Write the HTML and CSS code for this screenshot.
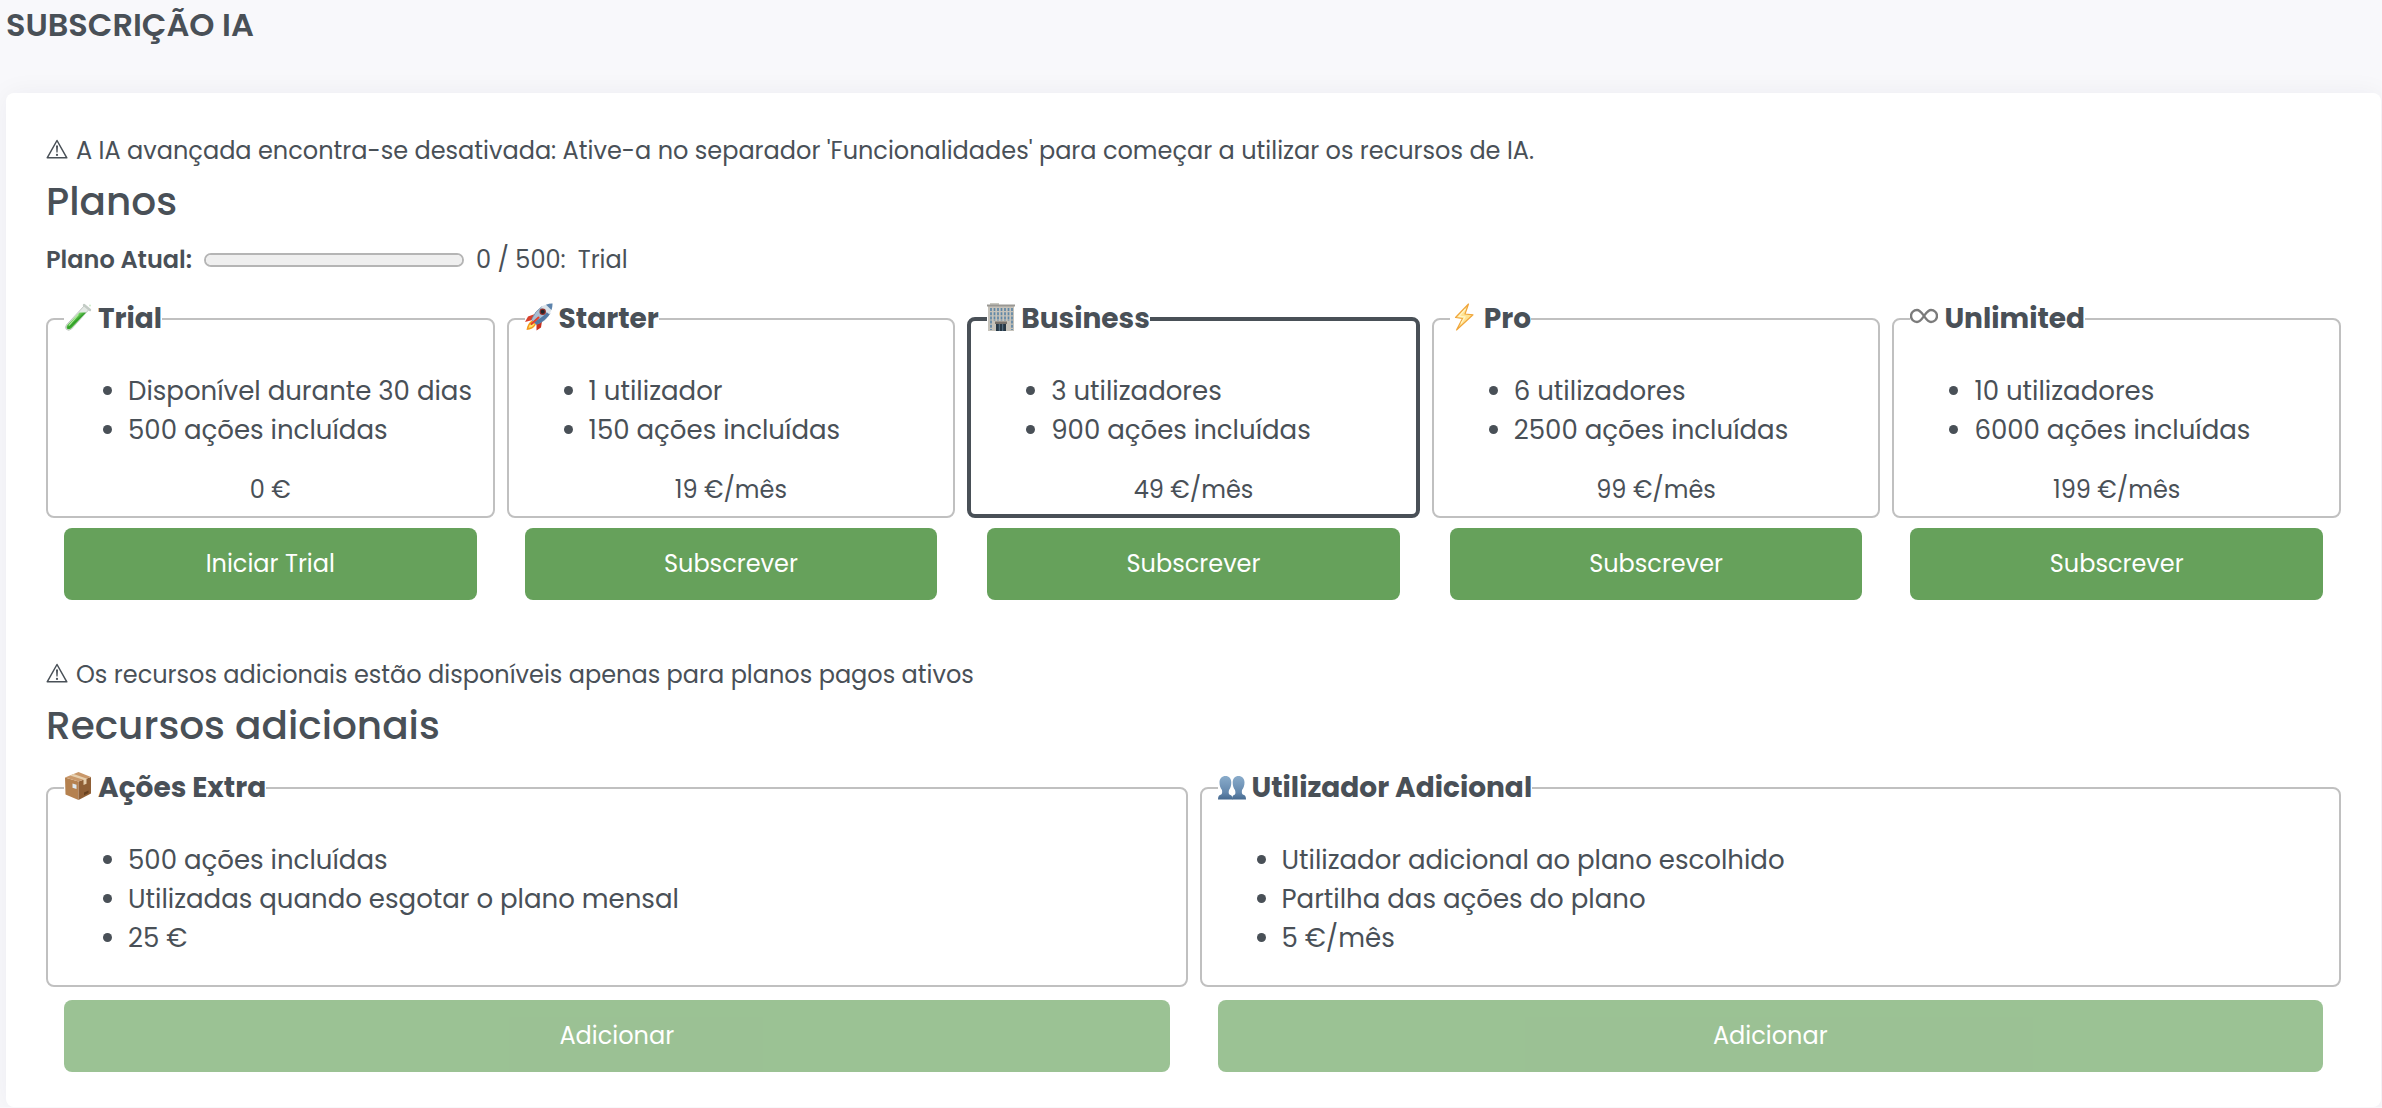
FILE: index.html
```html
<!DOCTYPE html>
<html lang="pt">
  <head>
    <meta charset="UTF-8" />
    <meta name="viewport" content="width=device-width, initial-scale=1.0" />
    <title>Subscrição IA</title>
    <link rel="stylesheet" href="styles.css">
  </head>
  <body>
    <!-- shared warning icon -->
    <svg class="sprite" aria-hidden="true">
      <symbol id="warning" viewBox="0 0 22 20">
        <path d="M11 1.5 L20.8 18.8 H1.2 Z" fill="none" stroke="currentColor" stroke-width="1.5" stroke-linejoin="round" />
        <path d="M10 6.5 h2 l-.4 7 h-1.2 z" fill="currentColor" />
        <circle cx="11" cy="15.9" r="1.1" fill="currentColor" />
      </symbol>
    </svg>

    <h1 class="page-title">SUBSCRIÇÃO IA</h1>

    <main class="card">
      <p class="notice"><svg class="warning-icon"><use href="#warning" /></svg>A IA avançada encontra-se desativada: Ative-a no separador 'Funcionalidades' para começar a utilizar os recursos de IA.</p>
      <h2>Planos</h2>
      <div class="usage">
        <label for="usage-bar">Plano Atual:</label>
        <progress id="usage-bar" value="0" max="500"></progress>
        <span>0 / 500:</span>
        <span>Trial</span>
      </div>

      <div class="plans">
        <div class="plan">
          <fieldset>
            <legend>
              <svg class="emoji" viewBox="0 0 28 28">
                <defs>
                  <linearGradient id="tube" x1="0" y1="0" x2="1" y2="1">
                    <stop offset="0.35" stop-color="#7fd66b" />
                    <stop offset="0.5" stop-color="#2f9e26" />
                    <stop offset="0.65" stop-color="#58c43e" />
                  </linearGradient>
                </defs>
                <path d="M20.500 2.500 L25 6.500 L7.500 26 Q4.500 28.500 2.200 26.200 Q.8 24.200 2.500 21.800 Z" fill="#e4e9e5" stroke="#aab5ad" stroke-width=".7" />
                <path d="M15.500 9.500 H22 L7.500 25 Q4.800 27.300 3 25.500 Q1.800 24 3.300 22 Z" fill="url(#tube)" />
                <path d="M14.500 11.500 L5 22.500" stroke="#b8efa5" stroke-width="1.1" />
                <path d="M20 2 L26 7" stroke="#c3cbc5" stroke-width="2.400" stroke-linecap="round" />
                <circle cx="26" cy="2.500" r="1" fill="#cfeccb" />
              </svg>
              Trial
            </legend>
            <ul>
              <li>Disponível durante 30 dias</li>
              <li>500 ações incluídas</li>
            </ul>
            <p class="price">0 €</p>
          </fieldset>
          <button type="button">Iniciar Trial</button>
        </div>

        <div class="plan">
          <fieldset>
            <legend>
              <svg class="emoji" viewBox="0 0 28 28">
                <path d="M10 11 L3 13.500 L0 19 L7.500 17 Z" fill="#d8402c" />
                <path d="M17 18 L16 24.500 L11.500 27.500 L11.500 20.500 Z" fill="#c9301f" />
                <path d="M7 17.500 Q2.500 20 1.500 27 Q8 26.500 11 21.500 Z" fill="#f59a1b" />
                <path d="M7.500 19.500 Q4.500 21 3.500 25 Q7.500 24.500 9.500 21.500 Z" fill="#ffe56a" />
                <path d="M6.500 16.500 Q10 8 17 3.500 L25 10.500 Q20 18.500 11.500 21.500 Z" fill="#a9bed4" stroke="#5c7898" stroke-width=".6" />
                <path d="M9 19 Q18 14 23 8.500 L25 10.500 Q20 18.500 11.500 21.500 Z" fill="#527aa5" />
                <path d="M16 4.200 Q21 .5 27.500 .5 Q27.500 6.500 24.500 11.500 Z" fill="#dbe3ea" />
                <path d="M21 1.800 Q24 .6 27.500 .5 Q27.500 4 26.500 7 Z" fill="#5c83ac" />
                <circle cx="17.700" cy="8.800" r="3.200" fill="#8f2d28" />
                <circle cx="17.700" cy="8.800" r="2" fill="#20262e" />
                <path d="M13.500 14.500 L6.500 21" stroke="#e2402d" stroke-width="2" stroke-linecap="round" />
              </svg>
              Starter
            </legend>
            <ul>
              <li>1 utilizador</li>
              <li>150 ações incluídas</li>
            </ul>
            <p class="price">19 €/mês</p>
          </fieldset>
          <button type="button">Subscrever</button>
        </div>

        <div class="plan plan-active">
          <fieldset>
            <legend>
              <svg class="emoji" viewBox="0 0 28 28">
                <rect x="3" y="0" width="9" height="3" fill="#c9c8c0" />
                <rect x="1" y="2" width="26" height="26" fill="#c6c3bb" />
                <rect x="0" y="1.500" width="28" height="2" fill="#9a9893" />
                <path d="M4 5 V27 M7.500 5 V18 M11 5 V18 M14.500 5 V18 M18 5 V18 M21.500 5 V18 M25 5 V27" stroke="#5f87a6" stroke-width="1.700" stroke-dasharray="3 1.200" />
                <rect x="8" y="18.500" width="12" height="2.500" fill="#77716b" />
                <rect x="9" y="21" width="10" height="7" fill="#263745" />
                <path d="M12.300 21 V28 M15.700 21 V28" stroke="#708ba0" stroke-width=".8" />
              </svg>
              Business
            </legend>
            <ul>
              <li>3 utilizadores</li>
              <li>900 ações incluídas</li>
            </ul>
            <p class="price">49 €/mês</p>
          </fieldset>
          <button type="button">Subscrever</button>
        </div>

        <div class="plan">
          <fieldset>
            <legend>
              <svg class="emoji" viewBox="0 0 28 28">
                <path d="M18.500 1 L5.500 14.500 L12.500 15.500 L6.500 27 L23 11.800 L15 11 Z" fill="#ffe391" stroke="#f0a63c" stroke-width="1.200" stroke-linejoin="round" />
                <path d="M15.500 6 L9 13.200 L15 14 L11 20.500" fill="none" stroke="#fff6c8" stroke-width="1.200" />
              </svg>
              Pro
            </legend>
            <ul>
              <li>6 utilizadores</li>
              <li>2500 ações incluídas</li>
            </ul>
            <p class="price">99 €/mês</p>
          </fieldset>
          <button type="button">Subscrever</button>
        </div>

        <div class="plan">
          <fieldset>
            <legend>
              <svg class="emoji" viewBox="0 0 28 28">
                <path d="M14 13 C11.500 9.500 10 7 7 7 A6 6 0 0 0 7 19 C10 19 11.500 16.500 14 13 C16.500 9.500 18 7 21 7 A6 6 0 0 1 21 19 C18 19 16.500 16.500 14 13 Z" fill="none" stroke="#7b7b7b" stroke-width="2.400" />
              </svg>
              Unlimited
            </legend>
            <ul>
              <li>10 utilizadores</li>
              <li>6000 ações incluídas</li>
            </ul>
            <p class="price">199 €/mês</p>
          </fieldset>
          <button type="button">Subscrever</button>
        </div>
      </div>

      <p class="notice"><svg class="warning-icon"><use href="#warning" /></svg>Os recursos adicionais estão disponíveis apenas para planos pagos ativos</p>
      <h2>Recursos adicionais</h2>

      <div class="plans extras">
        <div class="plan">
          <fieldset>
            <legend>
              <svg class="emoji" viewBox="0 0 28 28">
                <path d="M1 5.500 L14.500 9.500 V28 L1.500 22.500 Z" fill="#b5814f" />
                <path d="M14.500 9.500 L27 5 V21.500 L14.500 28 Z" fill="#8f5f36" />
                <path d="M1 5.500 L14.500 0 L27 5 L14.500 9.500 Z" fill="#c9986a" />
                <path d="M6 3.400 L19.500 7.700 V13 L22.500 11.800 V6.600 L9.500 2 Z" fill="#e6cfae" />
                <path d="M8.500 11.500 L12.500 12.700 V17 L8.500 15.700 Z" fill="#dfe8ee" />
                <path d="M20 20.500 L24.500 18.500 V21 L20 23.200 Z" fill="#67411f" />
              </svg>
              Ações Extra
            </legend>
            <ul>
              <li>500 ações incluídas</li>
              <li>Utilizadas quando esgotar o plano mensal</li>
              <li>25 €</li>
            </ul>
          </fieldset>
          <button type="button" disabled>Adicionar</button>
        </div>

        <div class="plan">
          <fieldset>
            <legend>
              <svg class="emoji" viewBox="0 0 28 28">
                <defs>
                  <linearGradient id="bust" x1="0" y1="0" x2="0" y2="1">
                    <stop offset="0" stop-color="#8aaccb" />
                    <stop offset="0.7" stop-color="#6488ad" />
                    <stop offset="1" stop-color="#46698f" />
                  </linearGradient>
                </defs>
                <path d="M20.500 4 C24 4 26.500 6.500 26.500 10.500 C26.500 14 25.500 16 24 18 C23.500 21 24 22.500 26 23 Q28 23.800 28 27.500 H14 Q14 23.800 16 23 C17.500 22.500 17.800 21 17 18 C15.500 16 14.700 14 14.700 10.500 C14.700 6.500 17 4 20.500 4 Z" fill="url(#bust)" />
                <path d="M7.500 4 C11 4 13.300 6.500 13.300 10.500 C13.300 14 12.500 16 11 18 C10.300 21 10.700 22.500 12.500 23 Q14.500 23.800 14.500 27.500 H0 Q0 23.800 2 23 C4 22.500 4.500 21 4 18 C2.500 16 1.500 14 1.500 10.500 C1.500 6.500 4 4 7.500 4 Z" fill="url(#bust)" />
              </svg>
              Utilizador Adicional
            </legend>
            <ul>
              <li>Utilizador adicional ao plano escolhido</li>
              <li>Partilha das ações do plano</li>
              <li>5 €/mês</li>
            </ul>
          </fieldset>
          <button type="button" disabled>Adicionar</button>
        </div>
      </div>
    </main>
  </body>
</html>
```
FILE: styles.css
```css
* {
  box-sizing: border-box;
}
body {
  margin: 0;
  background-color: #f8f8fb;
  color: #495057;
  font-family: Poppins, Inter, sans-serif;
  font-size: 24px;
  line-height: 36px;
}
.sprite {
  position: absolute;
  width: 0;
  height: 0;
}
.page-title {
  margin: 0;
  padding: 0 6px;
  font-size: 32px;
  line-height: 49px;
  font-weight: 600;
}
.card {
  margin: 44px 1px 0 6px;
  padding: 40px 40px 35px;
  background-color: #fff;
  border-radius: 8px;
  box-shadow: 0 0 26px rgba(18, 38, 63, 0.05);
}
.notice {
  display: flex;
  align-items: center;
  gap: 8px;
  margin: 0;
}
.warning-icon {
  width: 22px;
  height: 20px;
  margin-bottom: 4px;
}
h2 {
  margin: 8px 0 16px;
  font-size: 39px;
  line-height: 49px;
  font-weight: 500;
}
.usage {
  display: flex;
  align-items: center;
  gap: 12px;
}
.usage label {
  font-weight: 600;
}
.usage progress {
  appearance: none;
  width: 260px;
  height: 14px;
  background-color: #efefef;
  border: 2px solid #b5b5b5;
  border-radius: 7px;
  overflow: hidden;
}
.usage progress::-webkit-progress-bar {
  background-color: #efefef;
}
.usage progress::-webkit-progress-value {
  background-color: #66a15b;
}
.plans {
  display: flex;
  gap: 12px;
  margin: 20px 0 57px;
}
.plan {
  flex: 1 1 0;
  display: flex;
  flex-direction: column;
  gap: 10px;
}
.plan-active {
  flex-basis: 4px;
}
fieldset {
  margin: 0;
  padding: 32px 16px 8px;
  min-width: 0;
  border: 2px solid #c0c0c0;
  border-radius: 8px;
}
.plan-active fieldset {
  padding-bottom: 6px;
  border: 4px solid #495057;
}
legend {
  display: flex;
  align-items: center;
  gap: 6px;
  padding: 0;
  font-size: 28px;
  line-height: 42px;
  font-weight: 700;
}
.emoji {
  width: 28px;
  height: 28px;
  margin-bottom: 4px;
}
ul {
  margin: 0;
  padding-left: 64px;
  font-size: 26px;
  line-height: 39px;
}
.price {
  margin: 22px 0 0;
  text-align: center;
}
button {
  margin: 0 18px;
  padding: 18px;
  border: none;
  border-radius: 8px;
  background-color: #66a15b;
  color: #fff;
  font: inherit;
  cursor: pointer;
}
.plan-active button {
  margin: 0 20px;
}
button:disabled {
  opacity: 0.65;
  cursor: default;
}
.extras {
  margin: 17px 0 0;
}
.extras .plan {
  gap: 13px;
}
.extras fieldset {
  padding-bottom: 27px;
}
```
